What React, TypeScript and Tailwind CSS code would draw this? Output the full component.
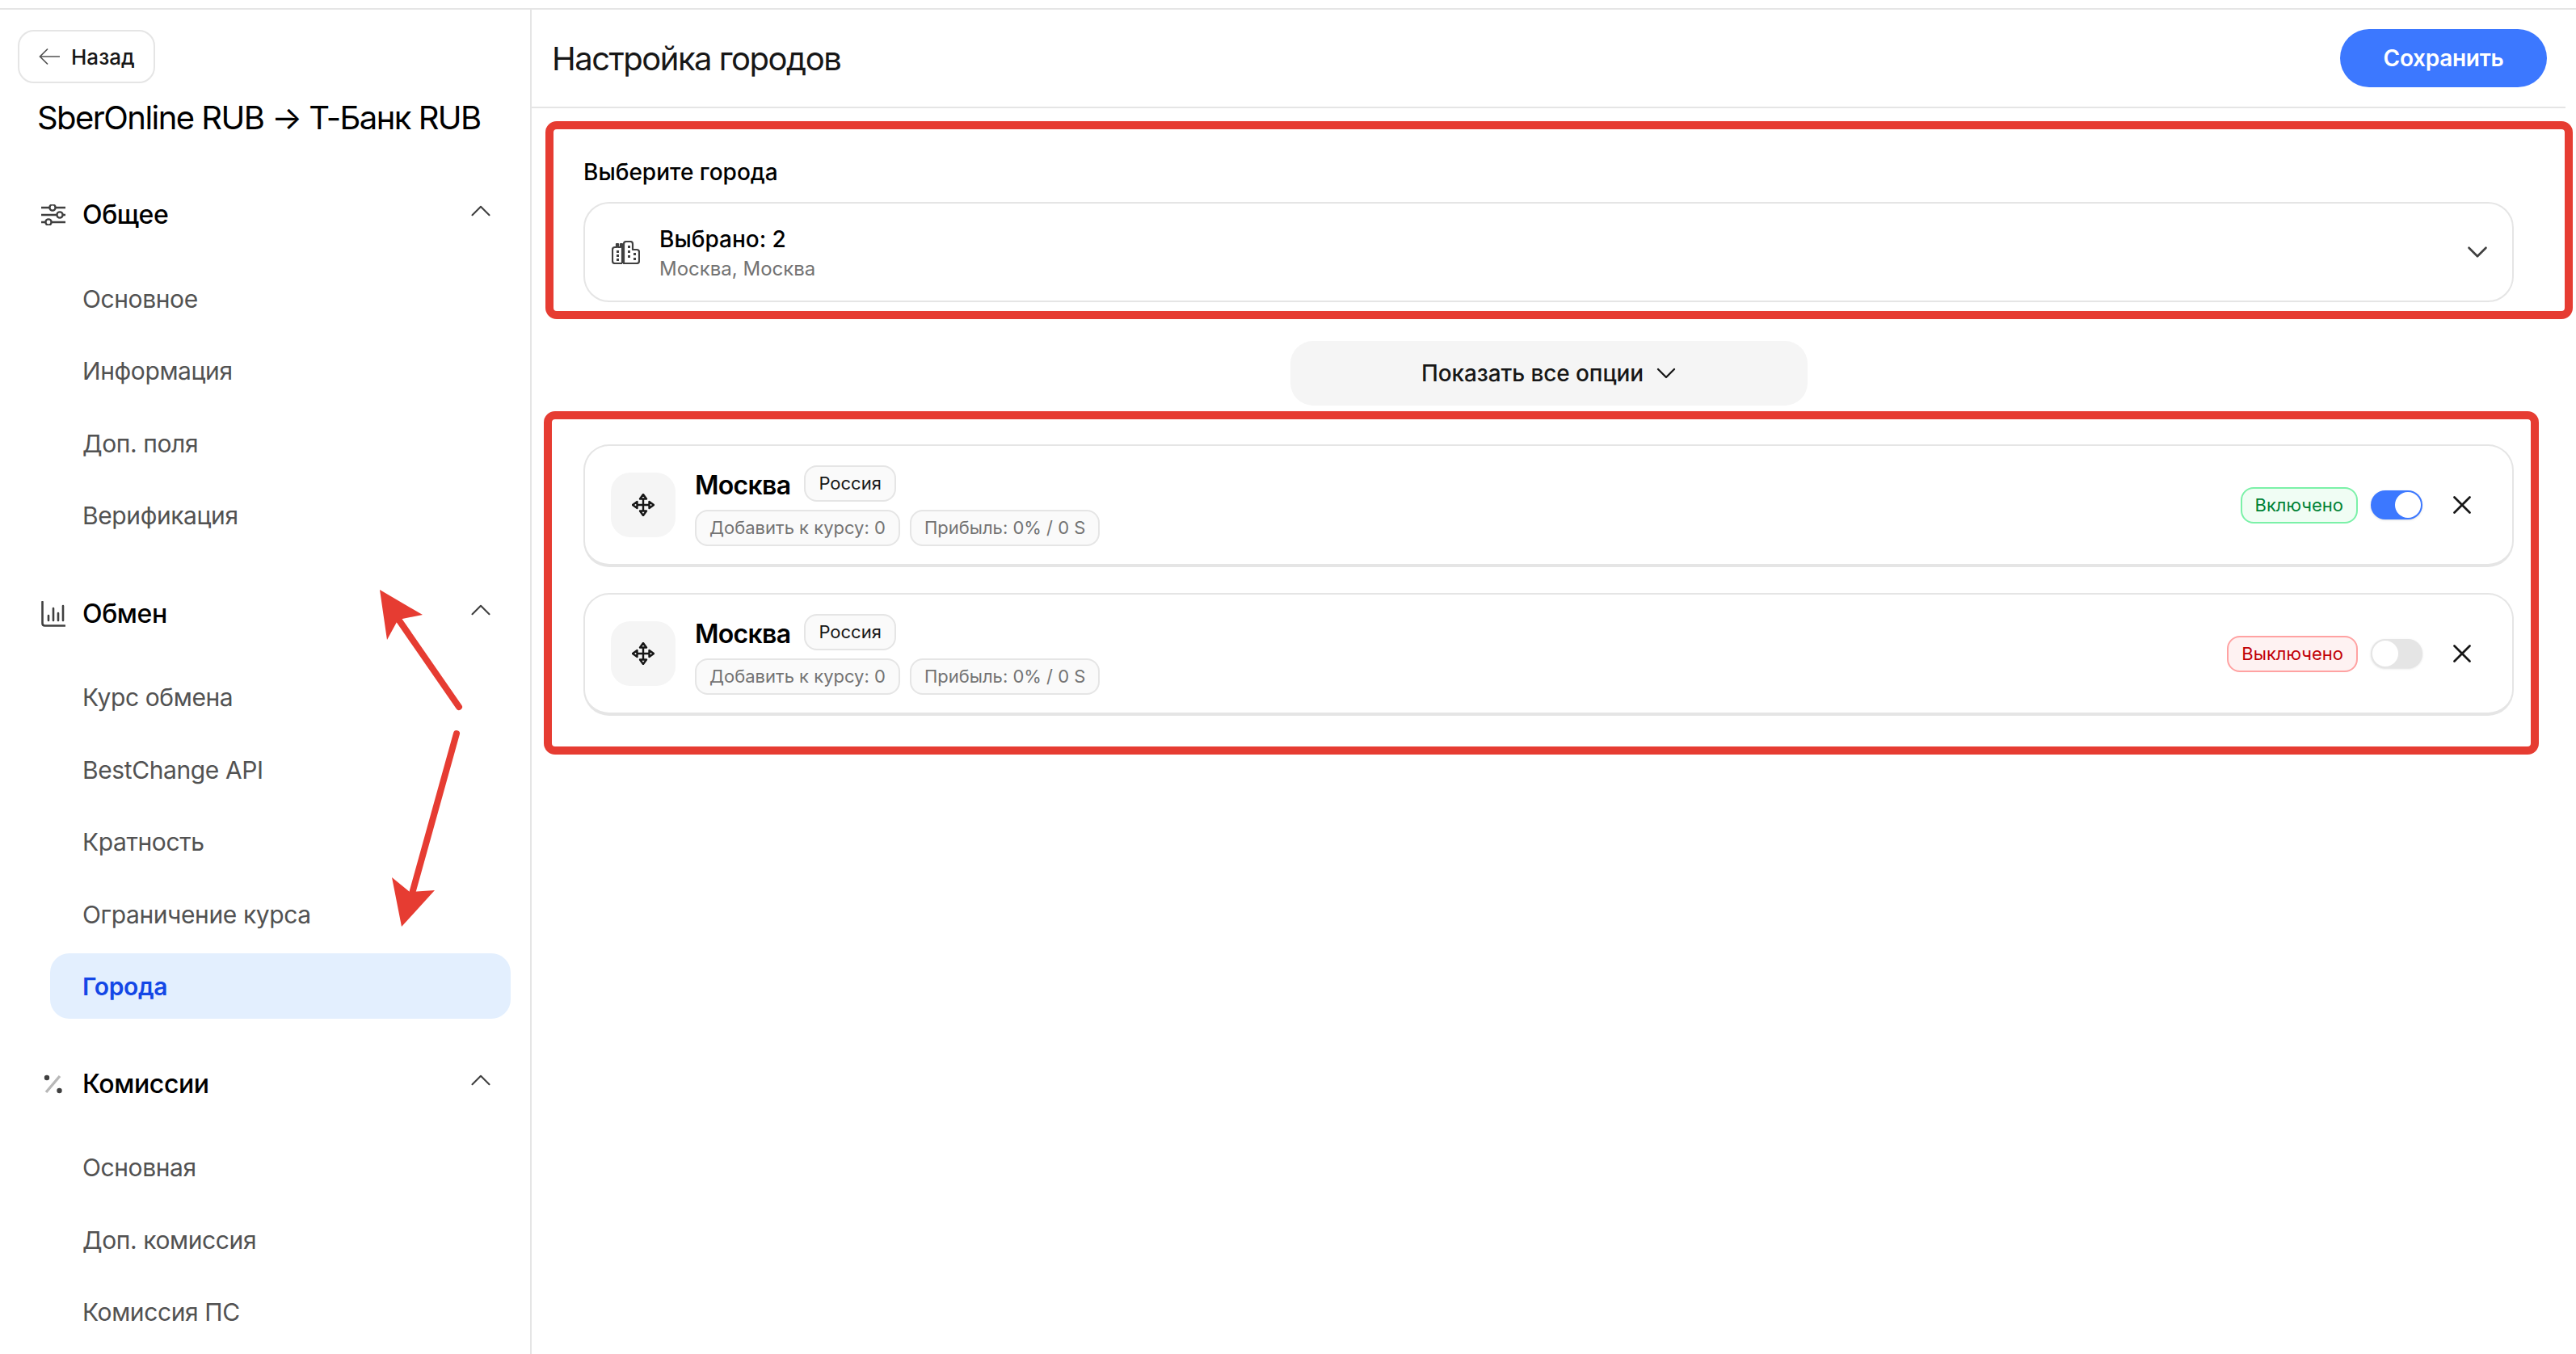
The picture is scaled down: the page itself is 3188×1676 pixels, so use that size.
import { ChevronDown, ChevronUp, X } from "lucide-react";

const FONT = "font-['Inter','Noto_Sans',sans-serif]";

function BackArrow() {
  return (
    <svg width="26" height="22" viewBox="0 0 26 22" fill="none" stroke="#525252" strokeWidth="1.7">
      <path d="M1.5 11H26M11 1.5L1.5 11L11 20.5" />
    </svg>
  );
}

function SlidersIcon() {
  return (
    <svg width="30" height="26" viewBox="0 0 30 26" fill="none" stroke="#404040" strokeWidth="2.4">
      <path d="M0 4h10M18 4h12M0 13h19M27 13h3M0 22h5M13 22h17" />
      <circle cx="14" cy="4" r="3.6" />
      <circle cx="23" cy="13" r="3.6" />
      <circle cx="9" cy="22" r="3.6" />
    </svg>
  );
}

function ChartIcon() {
  return (
    <svg width="30" height="32" viewBox="0 0 30 32" fill="none" stroke="#404040" strokeWidth="2.6" strokeLinecap="round">
      <path d="M1.5 1v26.5q0 3 3 3H29" />
      <path d="M9 18v6M15 9v15M21 15v9M27 6v18" />
    </svg>
  );
}

function PercentIcon() {
  return (
    <svg width="24" height="24" viewBox="0 0 24 24" fill="none">
      <path d="M20 2L3 22" stroke="#b8b8b8" strokeWidth="3.4" />
      <circle cx="4" cy="4" r="3.2" fill="#404040" />
      <circle cx="19.5" cy="20" r="3.2" fill="#404040" />
    </svg>
  );
}

function CityIcon() {
  return (
    <svg width="35" height="29" viewBox="0 0 35 29" fill="none" stroke="#404040" strokeWidth="2.2" strokeLinejoin="round">
      <path d="M13 28H4q-3 0-3-3V11q0-3 3-3h2V4h2v4h3V4h2v24" />
      <path d="M15 28V4q0-3 3-3h5q3 0 3 3v7h5q3 0 3 3v11q0 3-3 3z" />
      <g fill="#404040" stroke="none">
        <rect x="6" y="12" width="3" height="3" />
        <rect x="6" y="17" width="3" height="3" />
        <rect x="6" y="22" width="3" height="3" />
        <rect x="20" y="6" width="3" height="3" />
        <rect x="20" y="12" width="3" height="3" />
        <rect x="20" y="18" width="3" height="3" />
        <rect x="27" y="15" width="3" height="3" />
        <rect x="27" y="21" width="3" height="3" />
      </g>
    </svg>
  );
}

function MoveIcon() {
  return (
    <svg width="28" height="28" viewBox="0 0 28 28" fill="none" stroke="#171717" strokeWidth="2.4" strokeLinejoin="round">
      <path d="M14 6v16M6 14h16" />
      <path d="M14 1l4 5.5h-8z" />
      <path d="M14 27l4-5.5h-8z" />
      <path d="M1 14l5.5-4v8z" />
      <path d="M27 14l-5.5-4v8z" />
    </svg>
  );
}

function Section({ icon, title, items, active }: { icon: React.ReactNode; title: string; items: string[]; active?: string }) {
  return (
    <div className="mb-[61px]">
      <div className="flex items-center h-[40px] pl-[51px] pr-[40px] mb-[44px]">
        <span className="w-[30px] flex justify-center shrink-0">{icon}</span>
        <span className="ml-[21px] text-[32px] font-medium tracking-[-0.4px] text-black">{title}</span>
        <ChevronUp className="ml-auto -mt-[10px] text-[#404040]" size={42} strokeWidth={1.2} />
      </div>
      <div className="flex flex-col gap-[9.5px]">
        {items.map((item) => (
          <div
            key={item}
            className={
              item === active
                ? "ml-[62px] w-[570px] h-[81px] -mt-[2px] pt-[3px] pl-[40px] flex items-center rounded-[24px] bg-[#e3effe] text-[30px] font-semibold tracking-[-0.35px] text-[#1447e6]"
                : "ml-[62px] w-[570px] h-[80px] pl-[40px] flex items-center text-[30px] tracking-[-0.4px] text-[#525252]"
            }
          >
            {item}
          </div>
        ))}
      </div>
    </div>
  );
}

function Sidebar() {
  return (
    <aside className="w-[658px] shrink-0 border-r-2 border-[#e5e5e5] overflow-hidden">
      <button className="ml-[22px] mt-[25px] h-[66px] w-[170px] pl-[24px] flex items-center gap-[14px] rounded-[20px] border-2 border-[#e5e5e5] text-[26px] font-medium text-[#171717]">
        <BackArrow />
        Назад
      </button>
      <h1 className="ml-[46px] mt-[18px] mb-[75px] h-[50px] leading-[50px] text-[40px] font-normal tracking-[-1.55px] text-black whitespace-nowrap">
        SberOnline RUB → Т-Банк RUB
      </h1>
      <Section icon={<SlidersIcon />} title="Общее" items={["Основное", "Информация", "Доп. поля", "Верификация"]} />
      <Section
        icon={<ChartIcon />}
        title="Обмен"
        items={["Курс обмена", "BestChange API", "Кратность", "Ограничение курса", "Города"]}
        active="Города"
      />
      <Section icon={<PercentIcon />} title="Комиссии" items={["Основная", "Доп. комиссия", "Комиссия ПС"]} />
    </aside>
  );
}

function CityCard({ on }: { on: boolean }) {
  return (
    <div className="h-[152px] flex items-center pl-[32px] pr-[43px] rounded-[32px] border-2 border-b-[4px] border-[#e5e5e5]">
      <div className="w-[80px] h-[80px] rounded-[24px] bg-[#f5f5f5] flex items-center justify-center">
        <MoveIcon />
      </div>
      <div className="ml-[24px] -mt-[2px] flex flex-col gap-[6px]">
        <div className="flex items-center">
          <span className="mt-[4px] text-[32px] font-semibold tracking-[-0.7px] text-black">Москва</span>
          <span className="ml-[17px] h-[45px] px-[16px] flex items-center rounded-[16px] border-2 border-[#e5e5e5] bg-[#fafafa] text-[22px] text-[#171717]">
            Россия
          </span>
        </div>
        <div className="flex gap-[12px]">
          <span className="h-[45px] px-[16px] flex items-center rounded-[16px] border-2 border-[#e5e5e5] bg-[#fafafa] text-[22px] text-[#737373]">
            Добавить к курсу: 0
          </span>
          <span className="h-[45px] px-[16px] flex items-center rounded-[16px] border-2 border-[#e5e5e5] bg-[#fafafa] text-[22px] text-[#737373]">
            Прибыль: 0% / 0 S
          </span>
        </div>
      </div>
      <div className="ml-auto flex items-center">
        {on ? (
          <span className="h-[45px] px-[16px] flex items-center rounded-[16px] border-2 border-[#7bf1a8] bg-[#f0fdf4] text-[22px] text-[#008236]">
            Включено
          </span>
        ) : (
          <span className="h-[45px] px-[16px] flex items-center rounded-[16px] border-2 border-[#ffa2a2] bg-[#fef2f2] text-[22px] text-[#c10007]">
            Выключено
          </span>
        )}
        {on ? (
          <div className="ml-[16px] w-[64px] h-[36px] rounded-full bg-[#3c78ff] p-[2px] flex justify-end shadow-sm">
            <span className="w-[32px] h-[32px] rounded-full bg-white" />
          </div>
        ) : (
          <div className="ml-[16px] w-[64px] h-[36px] rounded-full bg-[#e5e5e5] p-[2px] flex justify-start shadow-sm">
            <span className="w-[32px] h-[32px] rounded-full bg-white" />
          </div>
        )}
        <X className="ml-[30px] text-[#171717]" size={38} strokeWidth={1.7} />
      </div>
    </div>
  );
}

function Main() {
  return (
    <main className="flex-1 mr-[13px] min-w-0">
      <header className="h-[122px] flex items-center justify-between border-b-2 border-[#e5e5e5] pl-[25px] pr-[23px]">
        <h2 className="mt-[2px] text-[40px] font-normal tracking-[-1.5px] text-[#171717]">Настройка городов</h2>
        <button className="w-[256px] h-[72px] rounded-full bg-[#3c78ff] text-white text-[28px] font-semibold tracking-[-0.3px]">Сохранить</button>
      </header>
      <div className="px-[64px]">
        <div className="mt-[60px] h-[38px] leading-[38px] text-[28px] font-medium text-black">Выберите города</div>
        <div className="mt-[18px] h-[124px] flex items-center pl-[33px] pr-[22px] rounded-[32px] border-2 border-[#e5e5e5]">
          <CityIcon />
          <div className="ml-[24px] flex flex-col gap-[1px]">
            <span className="text-[28px] leading-[38px] mt-[1px] font-medium text-black">Выбрано: 2</span>
            <span className="text-[24px] leading-[32px] mt-[1px] text-[#737373]">Москва, Москва</span>
          </div>
          <ChevronDown className="ml-auto text-[#404040]" size={42} strokeWidth={1.5} />
        </div>
        <div className="mt-[48px] flex justify-center">
          <button className="w-[640px] h-[80px] pl-[8px] rounded-[28px] bg-[#f5f5f5] flex items-center justify-center gap-[8px] text-[28px] font-medium tracking-[-0.1px] text-[#171717]">
            Показать все опции
            <ChevronDown size={40} strokeWidth={1.4} />
          </button>
        </div>
        <div className="mt-[48px] flex flex-col gap-[32px]">
          <CityCard on />
          <CityCard on={false} />
        </div>
      </div>
    </main>
  );
}

// Red annotations drawn over the screenshot
function Annotations() {
  return (
    <>
      <div className="absolute left-[675px] top-[150px] w-[2509px] h-[245px] rounded-[14px] border-[10px] border-[#e63c32]" />
      <div className="absolute left-[673px] top-[509px] w-[2469px] h-[425px] rounded-[14px] border-[10px] border-[#e63c32]" />
      <svg className="absolute left-0 top-0" width="658" height="1676" fill="none">
        <path d="M568 875L494 768" stroke="#e63c32" strokeWidth="8" strokeLinecap="round" />
        <path d="M470 730L523 761L498 766L491 770L479 792Z" fill="#e63c32" />
        <path d="M565 908L510 1106" stroke="#e63c32" strokeWidth="8" strokeLinecap="round" />
        <path d="M497 1147L485 1086L507 1104L538 1102Z" fill="#e63c32" />
      </svg>
    </>
  );
}

export default function App() {
  return (
    <div className={`relative w-[3188px] h-[1676px] overflow-hidden bg-white pt-[10px] ${FONT}`}>
      <div className="h-full flex border-t-2 border-[#e5e5e5]">
        <Sidebar />
        <Main />
      </div>
      <Annotations />
    </div>
  );
}
